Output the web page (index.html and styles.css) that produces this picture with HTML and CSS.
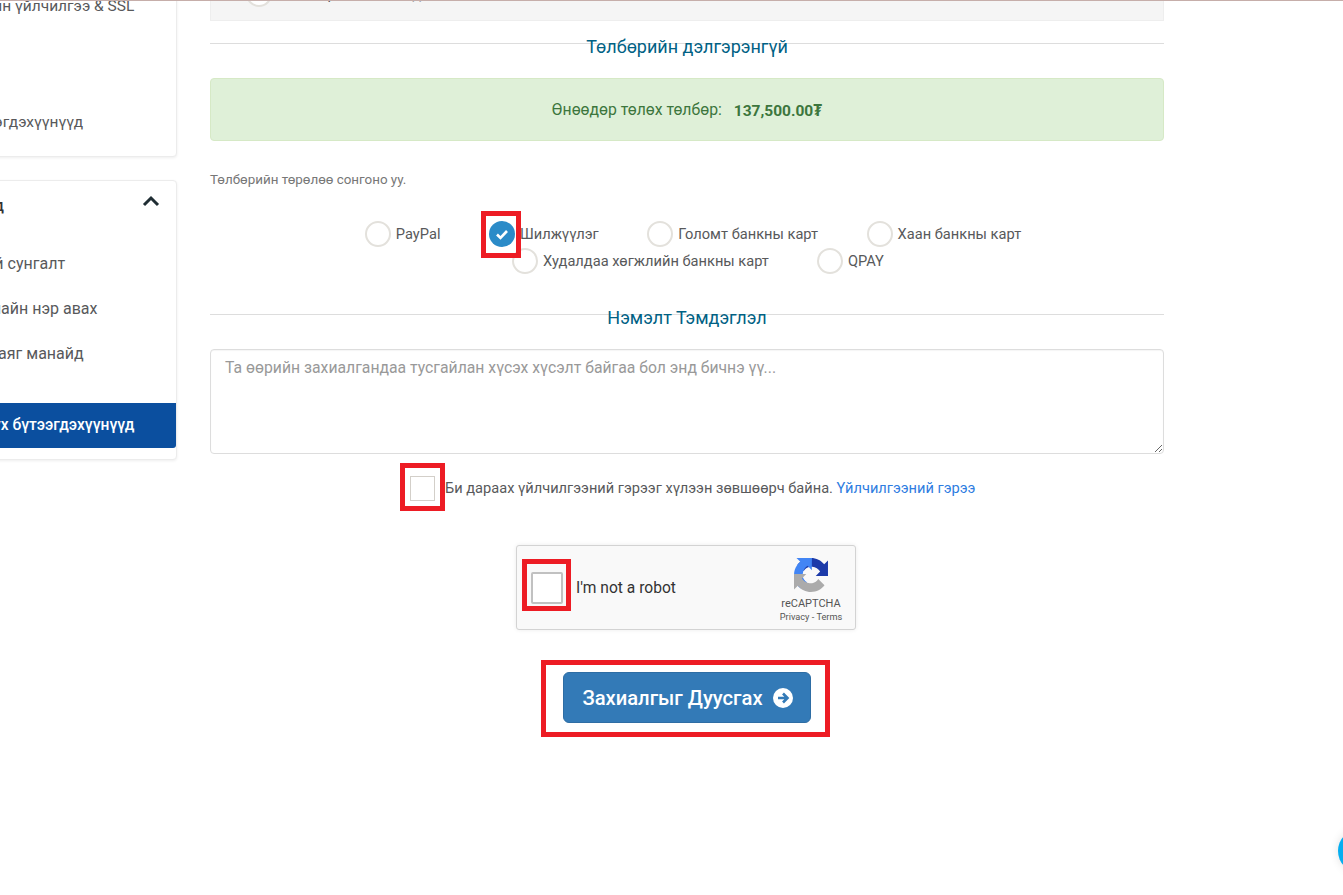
FILE: index.html
```html
<!DOCTYPE html>
<html lang="mn">
<head>
<meta charset="utf-8">
<title>Захиалга</title>
<link rel="stylesheet" href="styles.css">
</head>
<body>
<div class="topline"></div>
<div class="page">
  <aside class="sidebar">
    <div class="card card-first">
      <a class="item item-ssl">Домэйн үйлчилгээ &amp; SSL</a>
      <a class="item item-last">Бүтээгдэхүүнүүд</a>
    </div>
    <div class="card card-second">
      <div class="card-head">
        <span class="card-title">Домэйнууд</span>
        <svg class="chevron" viewBox="0 0 18 12"><path d="M2 10l7-7 7 7" fill="none" stroke="#1f2d33" stroke-width="3"/></svg>
      </div>
      <a class="item item-big item-renew">Домэйний сунгалт</a>
      <a class="item item-big item-new">Домайн нэр авах</a>
      <a class="item item-big item-move">Домайн хаяг манайд</a>
      <a class="item item-active">Бүх бүтээгдэхүүнүүд</a>
    </div>
  </aside>
  <main class="main">
    <div class="prev-box">
      <span class="radio"></span><span class="prev-text">Шинээр холбоо мэдээлэл</span>
    </div>
    <h2 class="section-title title-pay">Төлбөрийн дэлгэрэнгүй</h2>
    <div class="alert">Өнөөдөр төлөх төлбөр: <strong class="amount">137,500.00₮</strong></div>
    <p class="hint">Төлбөрийн төрөлөө сонгоно уу.</p>
    <div class="pay-row pay-row-1">
      <label class="pay"><span class="radio"></span>PayPal</label>
      <label class="pay">
        <span class="radio radio-on"><svg viewBox="0 0 26 26"><path d="M8 13.5l3.5 3.5L18 10" fill="none" stroke="#fff" stroke-width="2.6"/></svg></span>Шилжүүлэг
      </label>
      <label class="pay"><span class="radio"></span>Голомт банкны карт</label>
      <label class="pay"><span class="radio"></span>Хаан банкны карт</label>
    </div>
    <div class="pay-row pay-row-2">
      <label class="pay"><span class="radio"></span>Худалдаа хөгжлийн банкны карт</label>
      <label class="pay"><span class="radio"></span>QPAY</label>
    </div>
    <h2 class="section-title title-notes">Нэмэлт Тэмдэглэл</h2>
    <textarea class="notes" placeholder="Та өөрийн захиалгандаа тусгайлан хүсэх хүсэлт байгаа бол энд бичнэ үү..."></textarea>
    <div class="agree">
      <span class="check"></span>
      <span class="agree-text">Би дараах үйлчилгээний гэрээг хүлээн зөвшөөрч байна. <a class="link">Үйлчилгээний гэрээ</a></span>
    </div>
    <div class="captcha">
      <span class="captcha-box"></span>
      <span class="captcha-label">I'm not a robot</span>
      <div class="captcha-brand">
        <svg class="captcha-logo" viewBox="0 0 64 64">
          <path d="M64 31.955l-.033-1.37V4.687l-7.16 7.16C50.948 4.674 42.033.093 32.05.093c-10.4 0-19.622 4.96-25.458 12.64l11.734 11.86c1.15-2.127 2.784-3.954 4.77-5.33 2.05-1.598 4.952-2.906 9.95-2.906.604 0 1.07.07 1.414.2 6.194.49 11.564 3.91 14.726 8.87l-8.306 8.307c10.52-.04 22.4-.066 23.1.2" fill="#1c3aa9"/>
          <path d="M31.96 0l-1.37.033H4.69l7.16 7.16C4.675 13.05.093 21.965.093 31.95c0 10.4 4.96 19.622 12.64 25.458l11.86-11.734c-2.127-1.15-3.954-2.784-5.33-4.77-1.598-2.05-2.906-4.952-2.906-9.95 0-.604.07-1.07.2-1.414.49-6.194 3.91-11.564 8.87-14.726l8.307 8.306C33.694 12.6 33.668.72 33.934.02" fill="#4285f4"/>
          <path d="M.001 31.96l.033 1.37v25.9l7.16-7.16c5.86 7.173 14.774 11.754 24.76 11.754 10.4 0 19.622-4.96 25.458-12.64l-11.734-11.86c-1.15 2.127-2.784 3.954-4.77 5.33-2.05 1.598-4.952 2.906-9.95 2.906-.604 0-1.07-.07-1.414-.2-6.194-.49-11.564-3.91-14.726-8.87l8.306-8.307c-10.52.04-22.4.066-23.1-.2" fill="#ababab"/>
        </svg>
        <span class="captcha-name">reCAPTCHA</span>
        <span class="captcha-links">Privacy - Terms</span>
      </div>
    </div>
    <div class="submit-wrap">
      <button class="submit" type="button">Захиалгыг Дуусгах
        <svg class="submit-icon" viewBox="0 0 20 20"><circle cx="10" cy="10" r="10" fill="#fff"/><path d="M5 10h9M10 5.5l4.5 4.5-4.5 4.5" fill="none" stroke="#337ab7" stroke-width="2.6"/></svg>
      </button>
    </div>
  </main>
</div>
<span class="mark mark-pay"></span>
<span class="mark mark-agree"></span>
<span class="mark mark-captcha"></span>
<span class="mark mark-submit"></span>
<span class="chat"></span>
</body>
</html>
```
FILE: styles.css
```css
html, body {
  margin: 0;
  height: 895px;
  overflow: hidden;
  background: #fff;
  font-family: Roboto, "Noto Sans", sans-serif;
  color: #58595b;
}
.topline {
  position: absolute;
  left: 0;
  top: 0;
  width: 100%;
  height: 1px;
  background: #c6aeaa;
  z-index: 3;
}
.page {
  display: flex;
  align-items: flex-start;
  margin-left: -90px;
}
.sidebar {
  width: 267px;
  flex: none;
  margin-top: -100px;
  display: flex;
  flex-direction: column;
  gap: 23px;
}
.card {
  background: #fff;
  border: 1px solid #ececec;
  border-radius: 4px;
  box-shadow: 0 1px 3px rgba(0,0,0,.07);
  box-sizing: border-box;
}
.card-first {
  height: 257px;
  padding-top: 83px;
}
.card-second {
  height: 280px;
  padding-bottom: 11px;
}
.card-head {
  height: 60px;
  box-sizing: border-box;
  display: flex;
  justify-content: space-between;
  padding: 0 16px 14px 8px;
  align-items: center;
}
.card-title {
  font-size: 16px;
  font-weight: 500;
  color: #333;
  padding-top: 2px;
}
.chevron {
  width: 18px;
  height: 12px;
  margin-top: -6px;
}
.item {
  display: block;
  height: 45px;
  line-height: 45px;
  font-size: 15.5px;
  white-space: nowrap;
}
.item-ssl {
  padding-left: 42px;
}
.item-last {
  margin-top: 71px;
  padding-left: 50px;
}
.item-big {
  font-size: 16px;
}
.item-renew {
  padding-left: 14px;
}
.item-new {
  padding-left: 57px;
}
.item-move {
  padding-left: 15px;
}
.item-active {
  margin-top: 27px;
  background: #0b4f9f;
  color: #fff;
  font-size: 15.6px;
  font-weight: 500;
  padding-left: 72px;
  border-radius: 0 0 3px 0;
}
.main {
  width: 954px;
  flex: none;
  margin-left: 33px;
  margin-top: -30px;
}
.prev-box {
  height: 51px;
  box-sizing: border-box;
  background: #f5f5f5;
  border: 1px solid #eee;
  display: flex;
  align-items: center;
  padding: 0 0 3px 35px;
  font-size: 15px;
}
.prev-text {
  margin-left: 8px;
}
.section-title {
  margin: 0;
  border-top: 1px solid #ddd;
  text-align: center;
  font-size: 18px;
  font-weight: 400;
  color: #006184;
}
.title-pay {
  margin-top: 22px;
  line-height: 6px;
}
.alert {
  margin-top: 28px;
  height: 63px;
  box-sizing: border-box;
  background: #dff0d8;
  border: 1px solid #d6e9c6;
  border-radius: 4px;
  color: #3c763d;
  font-size: 15.75px;
  display: flex;
  align-items: center;
  justify-content: center;
  gap: 12px;
}
.amount {
  font-size: 15.5px;
  font-weight: 700;
}
.hint {
  margin: 32px 0 0;
  font-size: 13.4px;
  line-height: 14px;
  color: #777;
}
.pay-row {
  display: flex;
  justify-content: center;
  gap: 48px;
  font-size: 14.65px;
  height: 27px;
}
.pay-row-1 {
  margin-top: 33px;
  padding-left: 12px;
  gap: 48.5px;
}
.pay-row-2 {
  padding-left: 22px;
}
.pay {
  display: flex;
  align-items: center;
  gap: 5px;
  height: 27px;
}
.radio {
  display: block;
  width: 26px;
  height: 26px;
  box-sizing: border-box;
  border: 2px solid #e3e1dc;
  border-radius: 50%;
  background: #fff;
  flex: none;
}
.radio-on {
  background: #2b8bc8;
  border: 0;
}
.radio-on svg {
  display: block;
}
.title-notes {
  margin-top: 40px;
  line-height: 6px;
}
.notes {
  display: block;
  width: 100%;
  height: 105px;
  box-sizing: border-box;
  margin-top: 28px;
  padding: 8px 14px;
  border: 1px solid #ddd;
  border-radius: 4px;
  font-family: inherit;
  font-size: 15.77px;
  line-height: 20px;
  box-shadow: inset 0 1px 1px rgba(0,0,0,.04);
}
.notes::placeholder {
  color: #999;
  opacity: 1;
}
.agree {
  display: flex;
  align-items: center;
  margin-top: 22px;
  padding-left: 200px;
  gap: 10px;
  font-size: 14.62px;
}
.agree-text {
  padding-bottom: 2px;
}
.check {
  width: 25px;
  height: 25px;
  box-sizing: border-box;
  border: 1px solid #d3cfc9;
  flex: none;
}
.link {
  color: #2f7de1;
}
.captcha {
  width: 340px;
  height: 85px;
  box-sizing: border-box;
  margin: 44px 0 0 306px;
  background: #f9f9f9;
  border: 1px solid #d3d3d3;
  border-radius: 3px;
  box-shadow: 0 0 4px rgba(0,0,0,.08);
  display: flex;
  align-items: center;
  padding-left: 14px;
}
.captcha-box {
  width: 32px;
  height: 32px;
  box-sizing: border-box;
  background: #fff;
  border: 2px solid #c1c1c1;
  border-radius: 2px;
  flex: none;
}
.captcha-label {
  margin-left: 13px;
  font-size: 15.6px;
  color: #333;
  flex: 1;
}
.captcha-brand {
  width: 76px;
  flex: none;
  display: flex;
  flex-direction: column;
  align-items: center;
  margin-right: 6px;
  padding-top: 6px;
  color: #555;
}
.captcha-logo {
  width: 34px;
  height: 34px;
  margin-bottom: 5px;
}
.captcha-name {
  font-size: 11px;
  line-height: 14px;
}
.captcha-links {
  font-size: 9.2px;
  line-height: 12px;
}
.submit-wrap {
  margin: 42px 0 0 353px;
}
.submit {
  width: 248px;
  height: 51px;
  background: #337ab7;
  border: 1px solid #2e6da4;
  border-radius: 6px;
  color: #fff;
  font-family: inherit;
  font-size: 20.2px;
  font-weight: 500;
  display: flex;
  align-items: center;
  justify-content: center;
  gap: 10px;
  padding: 0 0 0 1px;
}
.submit-icon {
  width: 20px;
  height: 20px;
}
.mark {
  position: absolute;
  border: 5px solid #ed1c24;
  box-sizing: border-box;
  z-index: 2;
}
.mark-pay {
  left: 481px;
  top: 211px;
  width: 40px;
  height: 47px;
}
.mark-agree {
  left: 400px;
  top: 463px;
  width: 45px;
  height: 48px;
}
.mark-captcha {
  left: 522px;
  top: 559px;
  width: 49px;
  height: 52px;
}
.mark-submit {
  left: 541px;
  top: 660px;
  width: 289px;
  height: 77px;
}
.chat {
  position: absolute;
  left: 1338px;
  top: 829px;
  width: 44px;
  height: 44px;
  border-radius: 50%;
  background: #05aef0;
  box-shadow: 0 0 10px rgba(0,0,0,.12);
}
```
